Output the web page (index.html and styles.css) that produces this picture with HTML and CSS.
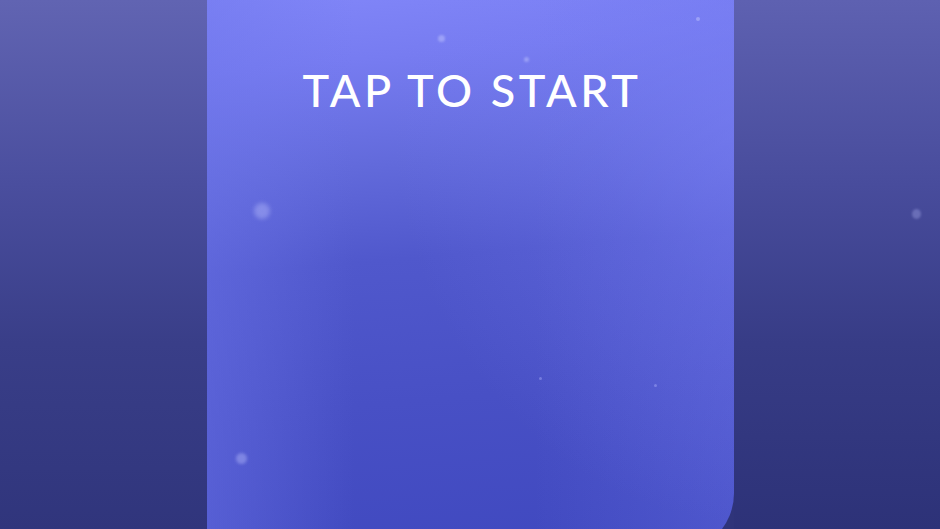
FILE: index.html
```html
<!DOCTYPE html>
<html lang="en">
<head>
  <meta charset="UTF-8" />
  <meta name="viewport" content="width=device-width, initial-scale=1.0" />
  <title>Tap to start</title>
  <link rel="stylesheet" href="styles.css">
</head>
<body>
  <div class="stage">
    <div class="side side-left"></div>
    <div class="panel">
      <div class="title">TAP TO START</div>
      <span class="dot dot-a"></span>
      <span class="dot dot-b"></span>
      <span class="dot dot-c"></span>
      <span class="dot dot-d"></span>
      <span class="dot dot-e"></span>
      <span class="dot dot-f"></span>
      <span class="dot dot-g"></span>
    </div>
    <div class="side side-right">
      <span class="dot dot-h"></span>
    </div>
  </div>
</body>
</html>
```

FILE: styles.css
```css
html, body {
  margin: 0;
  height: 100%;
  overflow: hidden;
}
body {
  font-family: Lato, 'Noto Sans', sans-serif;
  background: #2f347a;
}
.stage {
  display: flex;
  height: 529px;
  width: 940px;
}
.side {
  position: relative;
  height: 100%;
}
.side-left {
  width: 207px;
  background: linear-gradient(180deg, #6164b2 0%, #4a4e9e 35%, #393e88 65%, #30357c 100%);
}
.side-right {
  flex: 1;
  background: linear-gradient(180deg, #5e61b1 0%, #484c9c 35%, #373c86 65%, #2d3278 100%);
}
.panel {
  position: relative;
  width: 527px;
  height: 553px;
  flex-shrink: 0;
  border-bottom-right-radius: 60px;
  background:
    radial-gradient(ellipse 70% 75% at 105% 20%, rgba(122, 128, 246, 0.6), rgba(122, 128, 246, 0.25) 45%, rgba(122, 128, 246, 0) 100%),
    linear-gradient(90deg, rgba(110, 118, 235, 0.45) 0%, rgba(110, 118, 235, 0) 28%, rgba(110, 118, 235, 0) 62%, rgba(110, 118, 235, 0.3) 100%),
    linear-gradient(175deg, #8186f8 0%, #777cf1 12%, #626adb 30%, #5058cc 46%, #4850c5 70%, #3f48bf 100%);
  display: flex;
  flex-direction: column;
  align-items: center;
}
.title {
  margin-top: 64px;
  color: #fff;
  font-size: 45px;
  font-weight: 500;
  letter-spacing: 3.6px;
  line-height: 52px;
  padding-left: 3px;
}
.dot {
  position: absolute;
  border-radius: 50%;
  background: rgba(200, 205, 255, 0.45);
}
.dot-a { left: 231px; top: 35px; width: 7px; height: 7px; filter: blur(1px); }
.dot-b { left: 317px; top: 57px; width: 5px; height: 5px; filter: blur(1px); }
.dot-c { left: 47px; top: 203px; width: 16px; height: 16px; filter: blur(2px); background: rgba(190, 195, 255, 0.4); }
.dot-d { left: 29px; top: 453px; width: 11px; height: 11px; filter: blur(1.5px); background: rgba(190, 195, 255, 0.4); }
.dot-e { left: 489px; top: 17px; width: 4px; height: 4px; }
.dot-f { left: 332px; top: 377px; width: 3px; height: 3px; background: rgba(180, 185, 255, 0.4); }
.dot-g { left: 447px; top: 384px; width: 3px; height: 3px; background: rgba(180, 185, 255, 0.4); }
.dot-h { left: 178px; top: 209px; width: 9px; height: 10px; filter: blur(1px); background: rgba(160, 165, 230, 0.4); }
```
